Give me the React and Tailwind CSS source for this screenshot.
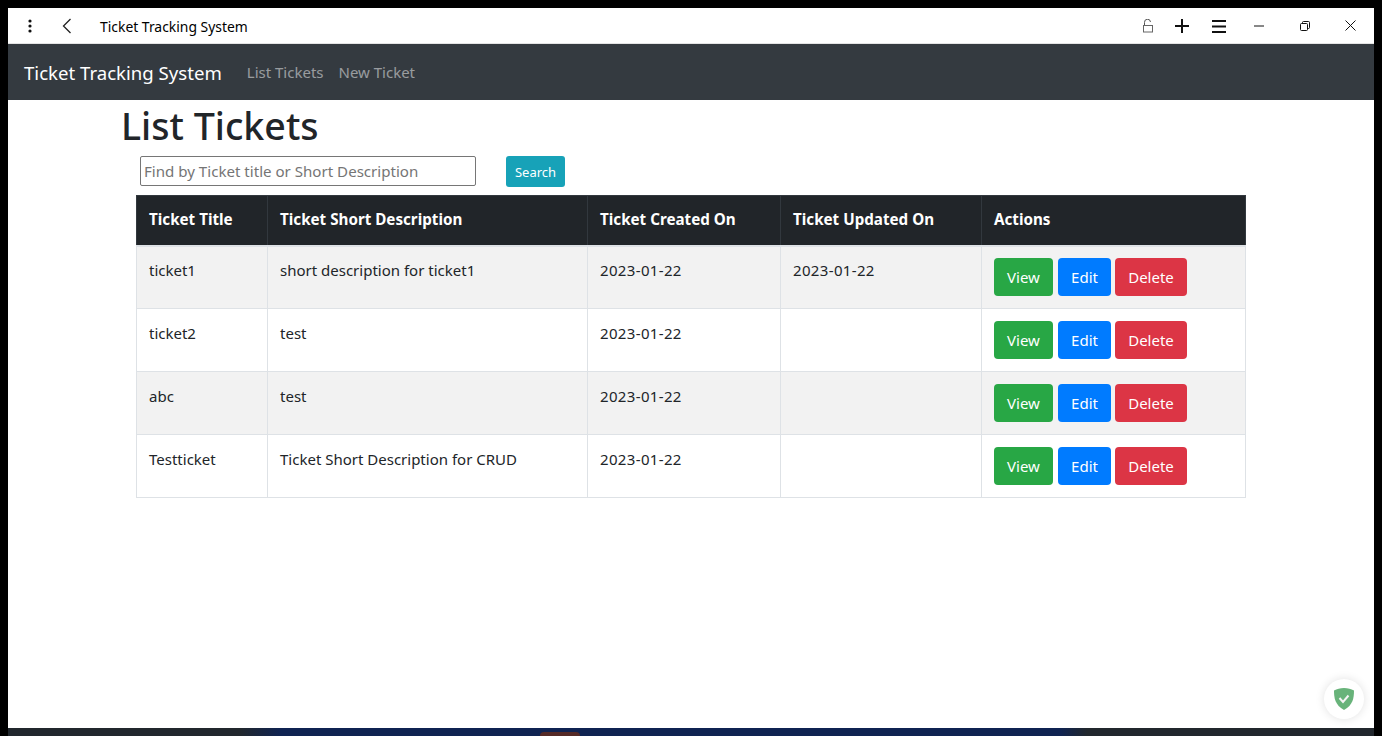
import React from 'react';

const tickets = [
  { title: 'ticket1', description: 'short description for ticket1', created: '2023-01-22', updated: '2023-01-22' },
  { title: 'ticket2', description: 'test', created: '2023-01-22', updated: '' },
  { title: 'abc', description: 'test', created: '2023-01-22', updated: '' },
  { title: 'Testticket', description: 'Ticket Short Description for CRUD', created: '2023-01-22', updated: '' },
];

const headers = ['Ticket Title', 'Ticket Short Description', 'Ticket Created On', 'Ticket Updated On', 'Actions'];

const TitleBar = () => (
  <div className="flex h-9 shrink-0 items-center border-b border-[#e4e4e4] bg-white text-black">
    <svg width="4" height="14" viewBox="0 0 4 14" className="ml-[20px]" fill="#111">
      <circle cx="2" cy="2" r="1.6" />
      <circle cx="2" cy="7" r="1.6" />
      <circle cx="2" cy="12" r="1.6" />
    </svg>
    <svg width="10" height="16" viewBox="0 0 10 16" className="ml-[30px]" fill="none" stroke="#222" strokeWidth="1.3">
      <path d="M8.5 1 L1.5 8 L8.5 15" />
    </svg>
    <span className="ml-[28px] pt-[4px] text-[13.9px]">Ticket Tracking System</span>
    <div className="ml-auto flex items-center">
      {/* open lock */}
      <svg width="12" height="14" viewBox="0 0 12 14" fill="none" stroke="#555" strokeWidth="1">
        <path d="M2.5 6 V3.5 a3 3 0 0 1 6 -0.5" />
        <rect x="1.5" y="6.5" width="9" height="6.5" stroke="#666" />
      </svg>
      <svg width="14" height="14" viewBox="0 0 14 14" className="ml-[21px]" stroke="#111" strokeWidth="2">
        <path d="M0 7 H14 M7 0 V14" />
      </svg>
      <svg width="14" height="14" viewBox="0 0 14 14" className="ml-[23px]" stroke="#111" strokeWidth="2">
        <path d="M0 2 H14 M0 7.5 H14 M0 13 H14" />
      </svg>
      <svg width="10" height="2" viewBox="0 0 10 2" className="ml-[28px]" stroke="#111" strokeWidth="1">
        <path d="M0 1 H10" />
      </svg>
      <svg width="10" height="10" viewBox="0 0 10 10" className="ml-[36px]" fill="none" stroke="#111" strokeWidth="1">
        <rect x="0.5" y="2.5" width="7" height="7" rx="1" />
        <path d="M2.5 2.5 V1.5 a1 1 0 0 1 1 -1 H8.5 a1 1 0 0 1 1 1 V6.5 a1 1 0 0 1 -1 1 H7.5" />
      </svg>
      <svg width="11" height="11" viewBox="0 0 11 11" className="ml-[35px] mr-[18px]" stroke="#111" strokeWidth="1">
        <path d="M0.5 0.5 L10.5 10.5 M10.5 0.5 L0.5 10.5" />
      </svg>
    </div>
  </div>
);

const NavBar = () => (
  <nav className="flex h-14 shrink-0 items-center bg-[#343a40] pl-4 pt-[2px]">
    <span className="text-[18.6px] text-white">Ticket Tracking System</span>
    <span className="ml-[25px] pb-[2px] text-[15px] text-white/50">List Tickets</span>
    <span className="ml-[15px] pb-[2px] text-[15px] text-white/50">New Ticket</span>
  </nav>
);

const ActionButton = ({ label, className }) => (
  <button className={`h-[38px] rounded text-[15px] text-white ${className}`}>{label}</button>
);

const TicketsTable = () => (
  <table className="ml-[128px] mt-[8px] w-[1109px] table-fixed border-collapse text-[15px] text-[#212529]">
    <colgroup>
      <col className="w-[131px]" />
      <col className="w-[320px]" />
      <col className="w-[193px]" />
      <col className="w-[201px]" />
      <col className="w-[264px]" />
    </colgroup>
    <thead>
      <tr className="h-[50px] bg-[#212529] text-white">
        {headers.map((header) => (
          <th key={header} className="border border-[#32383e] border-b-2 border-b-[#dee2e6] px-3 pb-[1px] text-left text-[15.2px] font-bold">
            {header}
          </th>
        ))}
      </tr>
    </thead>
    <tbody>
      {tickets.map((ticket, index) => {
        const cell = `border border-[#dee2e6] px-3 align-top ${index === 0 ? 'pt-[12px]' : 'pt-[13px]'}`;
        return (
          <tr key={ticket.title} className={`h-[63px] ${index % 2 === 0 ? 'bg-[#f2f2f2]' : 'bg-white'}`}>
            <td className={cell}>{ticket.title}</td>
            <td className={cell}>{ticket.description}</td>
            <td className={`${cell} tracking-[0.35px]`}>{ticket.created}</td>
            <td className={`${cell} tracking-[0.35px]`}>{ticket.updated}</td>
            <td className="border border-[#dee2e6] px-3 align-middle">
              <div className="flex">
                <ActionButton label="View" className="w-[59px] bg-[#28a745]" />
                <ActionButton label="Edit" className="ml-[5px] w-[53px] bg-[#007bff]" />
                <ActionButton label="Delete" className="ml-[4px] w-[72px] bg-[#dc3545]" />
              </div>
            </td>
          </tr>
        );
      })}
    </tbody>
  </table>
);

const App = () => (
  <div className="flex h-screen flex-col overflow-hidden bg-black px-2 pt-2 font-['Noto_Sans','Open_Sans',sans-serif]">
    <TitleBar />
    <NavBar />
    <main className="relative flex-1 bg-white">
      <h1 className="ml-[113px] text-[37.6px] font-medium leading-[52px] text-[#212529]">List Tickets</h1>
      <div className="ml-[132px] mt-[4px] flex items-start">
        <input
          readOnly
          placeholder="Find by Ticket title or Short Description"
          className="h-[30px] w-[336px] rounded-[2px] border border-[#767676] bg-white px-[3px] text-[15.1px] placeholder:text-[#757575]"
        />
        <button className="ml-[30px] h-[31px] w-[59px] rounded-[3px] bg-[#17a2b8] pt-[2px] text-[13px] text-white">Search</button>
      </div>
      <TicketsTable />
      {/* adblock shield badge */}
      <div className="absolute bottom-[9px] right-[10px] flex h-10 w-10 items-center justify-center rounded-full bg-white shadow-[0_0_10px_rgba(0,0,0,0.12)]">
        <svg width="20" height="22" viewBox="0 0 20 22">
          <path d="M10 0 C6 0 3 1 0 2.5 C0 10 1 17 10 22 C19 17 20 10 20 2.5 C17 1 14 0 10 0 Z" fill="#68b37a" />
          <path d="M5.5 10 L9 14 L14.5 7.5" fill="none" stroke="#f4f4f4" strokeWidth="2" />
        </svg>
      </div>
    </main>
    <div className="relative h-2 shrink-0 bg-[linear-gradient(to_right,#21272d_0%,#21272d_17%,#0f2352_20%,#0f2352_77%,#21272d_79%,#21272d_100%)]">
      <div className="absolute bottom-0 left-[532px] h-1 w-10 rounded-t-md bg-[#552a26]" />
    </div>
  </div>
);

export default App;
